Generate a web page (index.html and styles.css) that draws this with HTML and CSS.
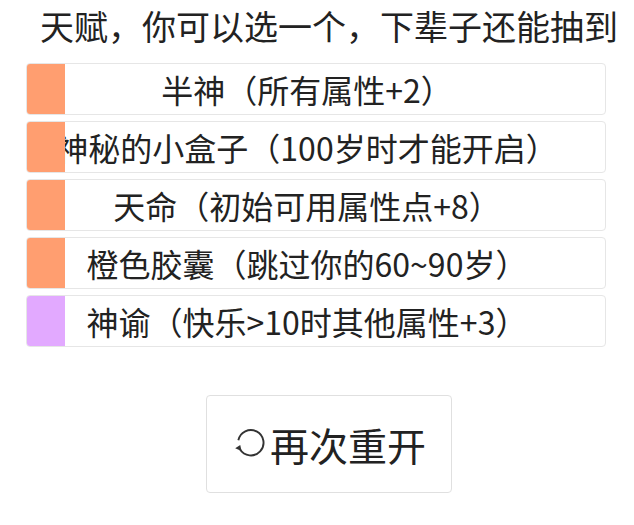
FILE: index.html
```html
<!DOCTYPE html>
<html lang="zh-CN">
<head>
    <meta charset="UTF-8">
    <meta name="viewport" content="width=device-width, initial-scale=1.0">
    <title>天赋</title>
    <link rel="stylesheet" href="styles.css">
</head>
<body>

    <div class="page">
        <h1 class="title">天赋，你可以选一个，下辈子还能抽到</h1>

        <ul class="talent-list">
            <li class="talent"><span class="grade grade-orange"></span><span class="talent-name">半神（所有属性+2）</span></li>
            <li class="talent"><span class="grade grade-orange"></span><span class="talent-name">神秘的小盒子（100岁时才能开启）</span></li>
            <li class="talent"><span class="grade grade-orange"></span><span class="talent-name">天命（初始可用属性点+8）</span></li>
            <li class="talent"><span class="grade grade-orange"></span><span class="talent-name">橙色胶囊（跳过你的60~90岁）</span></li>
            <li class="talent"><span class="grade grade-purple"></span><span class="talent-name">神谕（快乐&gt;10时其他属性+3）</span></li>
        </ul>

        <div class="actions">
            <button class="restart">
                <!-- icono de reinicio: círculo con flecha -->
                <svg class="restart-icon" width="36" height="36" viewBox="0 0 34 34">
                    <path d="M7.5 22 A12 12 0 1 0 6 13.5" fill="none" stroke="#333" stroke-width="1.8"/>
                    <path d="M3 21 L7.8 18 L9 23.5 Z" fill="#333"/>
                </svg>
                <span>再次重开</span>
            </button>
        </div>
    </div>

</body>
</html>
```

FILE: styles.css
```css
body {
    margin: 0;
    background-color: #fff;
    color: #222;
    font-family: "Noto Sans CJK SC", "Noto Sans", sans-serif;
}
.page {
    width: 634px;
    overflow: hidden;
}
.title {
    margin: 0;
    padding: 4px 0 0 40px;
    font-size: 34px;
    font-weight: normal;
    line-height: 44px;
    white-space: nowrap;
}
.talent-list {
    list-style: none;
    margin: 15px 0 0 26px;
    padding: 0;
    width: 580px;
    display: flex;
    flex-direction: column;
    gap: 6px;
}
.talent {
    position: relative;
    height: 50px;
    border: 1px solid #e6e6e6;
    border-radius: 4px;
    display: flex;
    align-items: center;
    justify-content: center;
    padding-right: 18px;
    overflow: hidden;
}
.talent-name {
    font-size: 32px;
    line-height: 50px;
    white-space: nowrap;
}
/* barra de color a la izquierda, por encima del texto */
.grade {
    position: absolute;
    left: -1px;
    top: -1px;
    bottom: -1px;
    width: 39px;
    border-radius: 4px 0 0 4px;
    z-index: 1;
}
.grade-orange {
    background-color: #ff9e70;
}
.grade-purple {
    background-color: #e2a9ff;
}
.actions {
    margin: 48px 0 0 206px;
}
.restart {
    width: 246px;
    height: 98px;
    border: 1px solid #e0e0e0;
    border-radius: 4px;
    background-color: #fff;
    display: flex;
    align-items: center;
    justify-content: center;
    gap: 2px;
    padding: 0;
    font-family: "Noto Sans CJK SC", sans-serif;
    font-size: 39px;
    color: #222;
}
.restart-icon {
    flex-shrink: 0;
}
```
